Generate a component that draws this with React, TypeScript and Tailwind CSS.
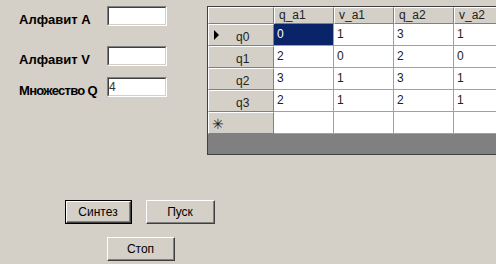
import React from "react";

const font = { fontFamily: '"Liberation Sans", Arial, sans-serif' };

const columns = ["q_a1", "v_a1", "q_a2", "v_a2"];
const rows = [
  { name: "q0", vals: ["0", "1", "3", "1"] },
  { name: "q1", vals: ["2", "0", "2", "0"] },
  { name: "q2", vals: ["3", "1", "3", "1"] },
  { name: "q3", vals: ["2", "1", "2", "1"] },
];

// classic sunken textbox
const TextBox = ({ value = "" }: { value?: string }) => (
  <div className="w-[60px] h-[20px] border-t border-l border-[#808080] border-r border-b border-r-white border-b-white">
    <div className="w-full h-full border-t border-l border-[#404040] border-r border-b border-r-[#d4d0c8] border-b-[#d4d0c8] bg-white text-[12px] leading-[16px] text-[#333]">
      {value}
    </div>
  </div>
);

// classic raised button
const Button = ({ label, w, def }: { label: string; w: string; def?: boolean }) => (
  <div className={`${w} h-[24px] ${def ? "border border-black" : ""}`}>
    <div className="w-full h-full border-t border-l border-white border-r border-b border-r-[#404040] border-b-[#404040]">
      <div className="w-full h-full border-r border-b border-[#808080] flex items-center justify-center text-[12px] text-black bg-[#d4d0c8]">
        {label}
      </div>
    </div>
  </div>
);

const HeadCell = ({ children, w }: { children?: React.ReactNode; w: string }) => (
  <div className={`${w} shrink-0 h-full border-t border-l border-white border-r border-b border-r-[#808080] border-b-[#808080] bg-[#d4d0c8] text-[12px] leading-[15px] pl-[4px] text-[#222]`}>
    {children}
  </div>
);

const Cell = ({ v, sel }: { v?: string; sel?: boolean }) => (
  <div
    className={`w-[60px] shrink-0 h-full border-r border-b border-[#a0a0a0] text-[12px] leading-[20px] pl-[3px] ${
      sel ? "bg-[#0a246a] text-white" : "bg-white text-[#222]"
    }`}
  >
    {v}
  </div>
);

const RowHead = ({ children }: { children?: React.ReactNode }) => (
  <div className="w-[66px] shrink-0 h-full border-t border-l border-white border-r border-b border-r-[#808080] border-b-[#808080] bg-[#d4d0c8] relative text-[12px] text-[#222]">
    {children}
  </div>
);

const Label = ({ children, tight }: { children: React.ReactNode; tight?: boolean }) => (
  <span
    className={`w-[88px] shrink-0 pt-[6px] text-[13px] leading-[15px] font-bold text-black whitespace-nowrap ${
      tight ? "tracking-[-0.7px]" : ""
    }`}
  >
    {children}
  </span>
);

export default function App() {
  return (
    <div style={font} className="w-[496px] h-[264px] bg-[#d4d0c8] overflow-hidden flex flex-col">
      {/* --- TOP --- */}
      <div className="flex pt-[6px]">
        {/* form */}
        <div className="w-[207px] shrink-0 pl-[19px] flex flex-col">
          <div className="flex items-start h-[20px]">
            <Label>Алфавит A</Label>
            <TextBox />
          </div>
          <div className="flex items-start h-[20px] mt-[20px]">
            <Label>Алфавит V</Label>
            <TextBox />
          </div>
          <div className="flex items-start h-[20px] mt-[11px]">
            <Label tight>Множество Q</Label>
            <TextBox value="4" />
          </div>
        </div>

        {/* grid */}
        <div className="w-[300px] shrink-0 h-[149px] border-t border-l border-b border-[#404040] bg-[#808080] flex flex-col">
          <div className="flex h-[17px]">
            <HeadCell w="w-[66px]" />
            {columns.map((c) => (
              <HeadCell key={c} w="w-[60px]">
                {c}
              </HeadCell>
            ))}
          </div>
          {rows.map((r, i) => (
            <div key={r.name} className="flex h-[22px]">
              <RowHead>
                {i === 0 && (
                  <svg className="absolute left-[5px] top-[5px]" width="5" height="10" viewBox="0 0 5 10">
                    <path d="M0 0 L5 5 L0 10 Z" fill="#000" />
                  </svg>
                )}
                <span className="absolute left-[27px] top-[3px]">{r.name}</span>
              </RowHead>
              {r.vals.map((v, j) => (
                <Cell key={j} v={v} sel={i === 0 && j === 0} />
              ))}
            </div>
          ))}
          <div className="flex h-[22px]">
            <RowHead>
              <span className="absolute left-[3px] top-[1px] text-[14px]">✳</span>
            </RowHead>
            {columns.map((c) => (
              <Cell key={c} />
            ))}
          </div>
        </div>
      </div>

      {/* --- BUTTONS --- */}
      <div className="flex pl-[65px] gap-[14px] mt-[45px]">
        <Button label="Синтез" w="w-[67px]" def />
        <Button label="Пуск" w="w-[69px]" />
      </div>
      <div className="flex pl-[107px] mt-[13px]">
        <Button label="Стоп" w="w-[68px]" />
      </div>
    </div>
  );
}
